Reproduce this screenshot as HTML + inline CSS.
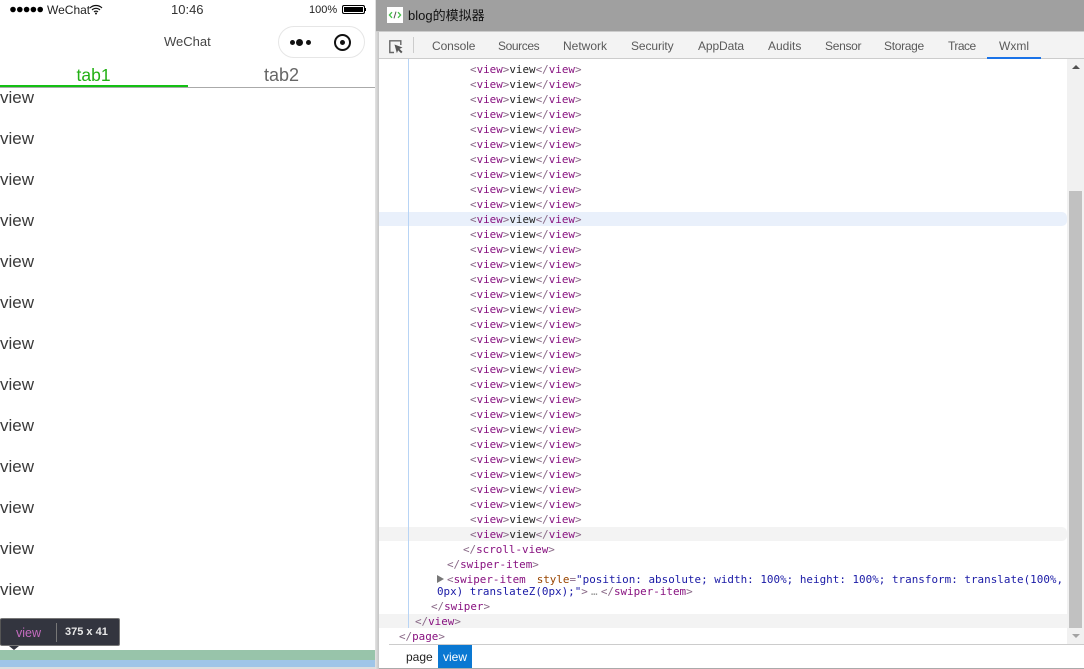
<!DOCTYPE html>
<html><head><meta charset="utf-8"><style>
html,body{margin:0;padding:0;width:1084px;height:669px;overflow:hidden;background:#fff;font-family:"Liberation Sans","Noto Sans CJK SC",sans-serif}
.a{position:absolute;white-space:nowrap}
.v{position:absolute;left:0;font-size:17px;line-height:20px;color:#3a3a3a}
.t{position:absolute;top:38px;font-size:12px;line-height:16px;color:#5a5a5a}
#code,.m{font-family:"DejaVu Sans Mono","Liberation Mono",monospace;font-size:10.9px;line-height:15px;color:#222}
#code{position:absolute;left:470px;top:62px}
#code div{height:15px;white-space:nowrap}
.m{position:absolute;white-space:nowrap}
i{font-style:normal;color:#8a6a88}
b{font-weight:normal;color:#881280}
u{text-decoration:none;color:#994500}
s{text-decoration:none;color:#1a1aa6}
</style></head><body>
<div class="a" style="left:375px;top:0;width:4px;height:669px;background:linear-gradient(90deg,#e4e4e4,#c4c4c4)"></div>

<!-- simulator -->
<svg class="a" style="left:9px;top:5px" width="36" height="9" viewBox="0 0 36 9"><g fill="#000"><circle cx="4" cy="4.5" r="2.8"/><circle cx="10.8" cy="4.5" r="2.8"/><circle cx="17.6" cy="4.5" r="2.8"/><circle cx="24.4" cy="4.5" r="2.8"/><circle cx="31.2" cy="4.5" r="2.8"/></g></svg>
<div class="a" style="left:47px;top:2px;font-size:12px;line-height:16px;color:#222">WeChat</div>
<svg class="a" style="left:89px;top:4px" width="14" height="11" viewBox="0 0 14 11"><path d="M1 4a8.5 8.5 0 0 1 12 0M3 6a5.6 5.6 0 0 1 8 0M5 8a2.8 2.8 0 0 1 4 0" fill="none" stroke="#111" stroke-width="1.2"/><circle cx="7" cy="9.5" r="1" fill="#111"/></svg>
<div class="a" style="left:171px;top:1px;font-size:13px;line-height:17px;color:#333">10:46</div>
<div class="a" style="left:309px;top:3px;font-size:11px;line-height:14px;color:#222">100%</div>
<div class="a" style="left:342px;top:5px;width:21px;height:7px;border:1px solid #000;border-radius:2px;background:#000;box-shadow:inset 0 0 0 1px #fff"></div>
<div class="a" style="left:365px;top:8px;width:1px;height:3px;background:#000"></div>
<div class="a" style="left:164px;top:33px;font-size:13px;line-height:17px;color:#444">WeChat</div>
<div class="a" style="left:278px;top:26px;width:85px;height:30px;border:1px solid #e6e6e6;border-radius:16px"></div>
<div class="a" style="left:290px;top:40px;width:5px;height:5px;border-radius:50%;background:#111"></div>
<div class="a" style="left:296px;top:39px;width:7px;height:7px;border-radius:50%;background:#111"></div>
<div class="a" style="left:306px;top:40px;width:5px;height:5px;border-radius:50%;background:#111"></div>
<div class="a" style="left:334px;top:34px;width:13px;height:13px;border:2px solid #111;border-radius:50%"></div>
<div class="a" style="left:340px;top:40px;width:5px;height:5px;border-radius:50%;background:#111"></div>
<div class="a" style="left:76.5px;top:64px;font-size:17.5px;line-height:22px;color:#22b014">tab1</div>
<div class="a" style="left:264px;top:64px;font-size:18px;line-height:22px;color:#666">tab2</div>
<div class="a" style="left:0;top:87px;width:375px;height:1px;background:#aaa"></div>
<div class="a" style="left:0;top:85px;width:188px;height:2px;background:#13c013"></div>

<div class="v" style="top:88px">view</div>
<div class="v" style="top:129px">view</div>
<div class="v" style="top:170px">view</div>
<div class="v" style="top:211px">view</div>
<div class="v" style="top:252px">view</div>
<div class="v" style="top:293px">view</div>
<div class="v" style="top:334px">view</div>
<div class="v" style="top:375px">view</div>
<div class="v" style="top:416px">view</div>
<div class="v" style="top:457px">view</div>
<div class="v" style="top:498px">view</div>
<div class="v" style="top:539px">view</div>
<div class="v" style="top:580px">view</div>

<div class="a" style="left:0;top:618px;width:118px;height:26px;background:#33353f;border:1px solid #777;border-left-color:#555;border-radius:2px"></div>
<div class="a" style="left:9px;top:646px;width:0;height:0;border:5px solid transparent;border-top:4px solid #33353f;border-bottom:0"></div>
<div class="a" style="left:16px;top:626px;font-size:12.5px;line-height:15px;color:#c56cc0">view</div>
<div class="a" style="left:56px;top:623px;width:1px;height:19px;background:#777"></div>
<div class="a" style="left:65px;top:625px;font-size:11px;font-weight:bold;line-height:15px;color:#e8e8e8">375 x 41</div>
<div class="a" style="left:0;top:650px;width:375px;height:10px;background:#98c4aa"></div>
<div class="a" style="left:0;top:660px;width:375px;height:7px;background:#9fc5e8"></div>
<div class="a" style="left:0;top:667px;width:375px;height:2px;background:#ddd"></div>

<!-- devtools -->
<div class="a" style="left:376px;top:0;width:708px;height:31px;background:#a0a0a0"></div>
<div class="a" style="left:376px;top:31px;width:708px;height:1px;background:#ccc"></div>
<svg class="a" style="left:387px;top:7px" width="16" height="16" viewBox="0 0 16 16"><rect width="16" height="16" fill="#fff"/><path d="M5 5.2L2.4 8 5 10.8M11 5.2L13.6 8 11 10.8" fill="none" stroke="#46c04a" stroke-width="1.3"/><path d="M9 4.6L7 11.4" fill="none" stroke="#555" stroke-width="1"/></svg>
<div class="a" style="left:408px;top:7px;font-size:13px;line-height:17px;color:#111">blog的模拟器</div>

<div class="a" style="left:379px;top:32px;width:705px;height:26px;background:#f3f3f3"></div>
<div class="a" style="left:379px;top:58px;width:705px;height:1px;background:#ccc"></div>
<svg class="a" style="left:389px;top:40px" width="15" height="14" viewBox="0 0 15 14"><path d="M5 12.5H.8V.8h11V5" fill="none" stroke="#666" stroke-width="1.4"/><path d="M5.5 4.5l8 3-3 1.4 3 3-1.4 1.4-3-3-1.2 3z" fill="#555"/></svg>
<div class="a" style="left:413px;top:37px;width:1px;height:16px;background:#ccc"></div>
<div class="t" style="left:432px;letter-spacing:-.1px">Console</div>
<div class="t" style="left:498px;letter-spacing:-.4px">Sources</div>
<div class="t" style="left:563px">Network</div>
<div class="t" style="left:631px;letter-spacing:-.1px">Security</div>
<div class="t" style="left:698px;letter-spacing:-.1px">AppData</div>
<div class="t" style="left:768px">Audits</div>
<div class="t" style="left:825px;letter-spacing:-.3px">Sensor</div>
<div class="t" style="left:884px;letter-spacing:-.3px">Storage</div>
<div class="t" style="left:948px;letter-spacing:-.5px">Trace</div>
<div class="t" style="left:999px">Wxml</div>
<div class="a" style="left:987px;top:57px;width:54px;height:2px;background:#1a73e8"></div>

<div class="a" style="left:379px;top:212px;width:688px;height:14px;background:#e9f0fb;border-radius:0 5px 5px 0"></div>
<div class="a" style="left:379px;top:527px;width:688px;height:14px;background:#f3f3f3;border-radius:0 5px 5px 0"></div>
<div class="a" style="left:379px;top:614px;width:688px;height:14px;background:#f3f3f3"></div>
<div class="a" style="left:408px;top:59px;width:1px;height:569px;background:#b8d4f5"></div>

<div id="code">
<div><i>&lt;</i><b>view</b><i>&gt;</i>view<i>&lt;/</i><b>view</b><i>&gt;</i></div>
<div><i>&lt;</i><b>view</b><i>&gt;</i>view<i>&lt;/</i><b>view</b><i>&gt;</i></div>
<div><i>&lt;</i><b>view</b><i>&gt;</i>view<i>&lt;/</i><b>view</b><i>&gt;</i></div>
<div><i>&lt;</i><b>view</b><i>&gt;</i>view<i>&lt;/</i><b>view</b><i>&gt;</i></div>
<div><i>&lt;</i><b>view</b><i>&gt;</i>view<i>&lt;/</i><b>view</b><i>&gt;</i></div>
<div><i>&lt;</i><b>view</b><i>&gt;</i>view<i>&lt;/</i><b>view</b><i>&gt;</i></div>
<div><i>&lt;</i><b>view</b><i>&gt;</i>view<i>&lt;/</i><b>view</b><i>&gt;</i></div>
<div><i>&lt;</i><b>view</b><i>&gt;</i>view<i>&lt;/</i><b>view</b><i>&gt;</i></div>
<div><i>&lt;</i><b>view</b><i>&gt;</i>view<i>&lt;/</i><b>view</b><i>&gt;</i></div>
<div><i>&lt;</i><b>view</b><i>&gt;</i>view<i>&lt;/</i><b>view</b><i>&gt;</i></div>
<div><i>&lt;</i><b>view</b><i>&gt;</i>view<i>&lt;/</i><b>view</b><i>&gt;</i></div>
<div><i>&lt;</i><b>view</b><i>&gt;</i>view<i>&lt;/</i><b>view</b><i>&gt;</i></div>
<div><i>&lt;</i><b>view</b><i>&gt;</i>view<i>&lt;/</i><b>view</b><i>&gt;</i></div>
<div><i>&lt;</i><b>view</b><i>&gt;</i>view<i>&lt;/</i><b>view</b><i>&gt;</i></div>
<div><i>&lt;</i><b>view</b><i>&gt;</i>view<i>&lt;/</i><b>view</b><i>&gt;</i></div>
<div><i>&lt;</i><b>view</b><i>&gt;</i>view<i>&lt;/</i><b>view</b><i>&gt;</i></div>
<div><i>&lt;</i><b>view</b><i>&gt;</i>view<i>&lt;/</i><b>view</b><i>&gt;</i></div>
<div><i>&lt;</i><b>view</b><i>&gt;</i>view<i>&lt;/</i><b>view</b><i>&gt;</i></div>
<div><i>&lt;</i><b>view</b><i>&gt;</i>view<i>&lt;/</i><b>view</b><i>&gt;</i></div>
<div><i>&lt;</i><b>view</b><i>&gt;</i>view<i>&lt;/</i><b>view</b><i>&gt;</i></div>
<div><i>&lt;</i><b>view</b><i>&gt;</i>view<i>&lt;/</i><b>view</b><i>&gt;</i></div>
<div><i>&lt;</i><b>view</b><i>&gt;</i>view<i>&lt;/</i><b>view</b><i>&gt;</i></div>
<div><i>&lt;</i><b>view</b><i>&gt;</i>view<i>&lt;/</i><b>view</b><i>&gt;</i></div>
<div><i>&lt;</i><b>view</b><i>&gt;</i>view<i>&lt;/</i><b>view</b><i>&gt;</i></div>
<div><i>&lt;</i><b>view</b><i>&gt;</i>view<i>&lt;/</i><b>view</b><i>&gt;</i></div>
<div><i>&lt;</i><b>view</b><i>&gt;</i>view<i>&lt;/</i><b>view</b><i>&gt;</i></div>
<div><i>&lt;</i><b>view</b><i>&gt;</i>view<i>&lt;/</i><b>view</b><i>&gt;</i></div>
<div><i>&lt;</i><b>view</b><i>&gt;</i>view<i>&lt;/</i><b>view</b><i>&gt;</i></div>
<div><i>&lt;</i><b>view</b><i>&gt;</i>view<i>&lt;/</i><b>view</b><i>&gt;</i></div>
<div><i>&lt;</i><b>view</b><i>&gt;</i>view<i>&lt;/</i><b>view</b><i>&gt;</i></div>
<div><i>&lt;</i><b>view</b><i>&gt;</i>view<i>&lt;/</i><b>view</b><i>&gt;</i></div>
<div><i>&lt;</i><b>view</b><i>&gt;</i>view<i>&lt;/</i><b>view</b><i>&gt;</i></div>
</div>
<div class="m" style="left:463px;top:542px"><i>&lt;/</i><b>scroll-view</b><i>&gt;</i></div>
<div class="m" style="left:447px;top:557px"><i>&lt;/</i><b>swiper-item</b><i>&gt;</i></div>
<div class="a" style="left:437px;top:575px;width:0;height:0;border-left:7px solid #777;border-top:4px solid transparent;border-bottom:4px solid transparent"></div>
<div class="m" style="left:447px;top:572px"><i>&lt;</i><b>swiper-item</b><u style="margin-left:11px">style</u><i>=</i><s style="letter-spacing:.025px">"position: absolute; width: 100%; height: 100%; transform: translate(100%,</s></div>
<div class="m" style="left:437px;top:584px"><s>0px) translateZ(0px);"</s><i>&gt;</i><span style="display:inline-block;width:13px;text-align:center;color:#999">…</span><i>&lt;/</i><b>swiper-item</b><i>&gt;</i></div>
<div class="m" style="left:431px;top:599px"><i>&lt;/</i><b>swiper</b><i>&gt;</i></div>
<div class="m" style="left:415px;top:614px"><i>&lt;/</i><b>view</b><i>&gt;</i></div>
<div class="m" style="left:399px;top:629px"><i>&lt;/</i><b>page</b><i>&gt;</i></div>

<!-- scrollbar -->
<div class="a" style="left:1067px;top:59px;width:17px;height:585px;background:#f1f1f1"></div>
<div class="a" style="left:1072px;top:65px;width:0;height:0;border:4px solid transparent;border-bottom:4px solid #505050;border-top:0"></div>
<div class="a" style="left:1069px;top:191px;width:13px;height:437px;background:#c1c1c1"></div>
<div class="a" style="left:1072px;top:634px;width:0;height:0;border:4px solid transparent;border-top:4px solid #a3a3a3;border-bottom:0"></div>

<!-- breadcrumb -->
<div class="a" style="left:389px;top:644px;width:695px;height:1px;background:#ccc"></div>
<div class="a" style="left:406px;top:650px;font-size:12px;line-height:15px;color:#222">page</div>
<div class="a" style="left:438px;top:645px;width:34px;height:23px;background:#0a78d2"></div>
<div class="a" style="left:443px;top:650px;font-size:12px;line-height:15px;color:#fff">view</div>
<div class="a" style="left:379px;top:668px;width:705px;height:1px;background:#aaa"></div>
</body></html>
